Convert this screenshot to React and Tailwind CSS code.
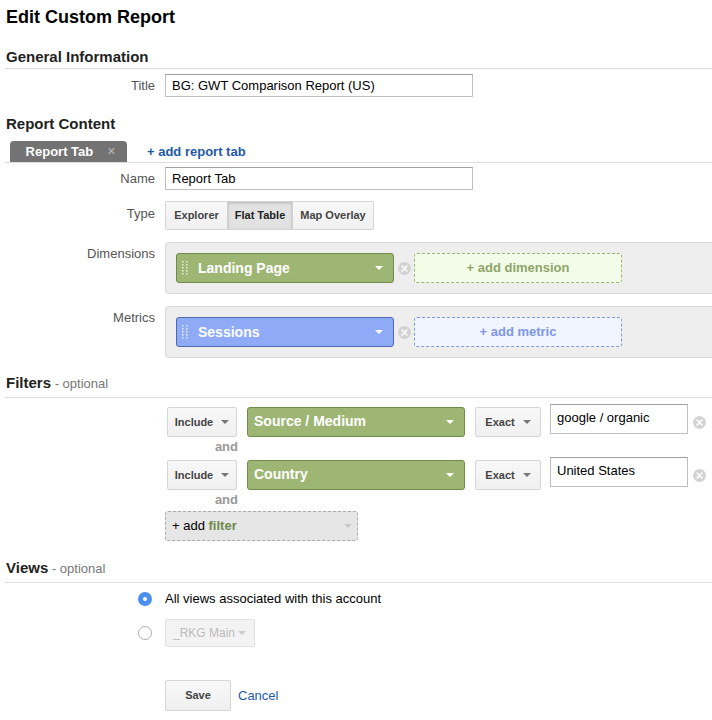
import React from "react";

const font = { fontFamily: '"Liberation Sans", Arial, sans-serif' };

const Caret = ({ className = "border-t-white" }) => (
  <span className={`inline-block w-0 h-0 border-l-[4px] border-r-[4px] border-t-[4px] border-l-transparent border-r-transparent ${className}`} />
);

const RemoveIcon = () => (
  <svg width="13" height="13" viewBox="0 0 13 13">
    <circle cx="6.5" cy="6.5" r="6.5" fill="#d3d3d3" />
    <path d="M4 4l5 5M9 4l-5 5" stroke="#fff" strokeWidth="1.6" strokeLinecap="round" />
  </svg>
);

const Handle = () => (
  <svg width="6" height="14" viewBox="0 0 6 14" className="shrink-0">
    {[1, 4, 7, 10, 13].map((y) => (
      <g key={y}>
        <rect x="0" y={y - 1} width="1.5" height="1.5" fill="#fff" opacity="0.8" />
        <rect x="4" y={y - 1} width="1.5" height="1.5" fill="#fff" opacity="0.8" />
      </g>
    ))}
  </svg>
);

const Label = ({ children, className = "" }) => (
  <div className={`w-[150px] shrink-0 text-right text-[13px] leading-[20px] text-[#555] ${className}`}>{children}</div>
);

const SectionHead = ({ title, optional, className = "" }) => (
  <div className={`border-b border-[#dcdcdc] leading-[20px] ${className}`}>
    <span className="text-[15px] font-bold text-[#222]">{title}</span>
    {optional && <span className="text-[13px] text-[#777]"> - optional</span>}
  </div>
);

const GrayButton = ({ children, className = "" }) => (
  <div className={`flex items-center justify-center gap-2 rounded-[2px] border border-[#d5d5d5] bg-gradient-to-b from-[#f8f8f8] to-[#f0f0f0] text-[11px] font-bold text-[#444] ${className}`}>
    {children}
  </div>
);

const Chip = ({ label, color, className = "" }) => (
  <div className={`flex items-center justify-between rounded-[3px] border pl-[5px] pr-[10px] text-[14px] font-bold text-white ${color} ${className}`}>
    <div className="flex items-center gap-[10px]">
      <Handle />
      <span>{label}</span>
    </div>
    <Caret />
  </div>
);

const FilterRow = ({ field, value }) => (
  <div className="flex items-start h-[33px]">
    <GrayButton className="ml-[2px] mt-[3px] h-[30px] w-[70px]">
      <span>Include</span>
      <Caret className="border-t-[#777]" />
    </GrayButton>
    <div className="ml-[10px] mt-[3px] flex h-[30px] w-[218px] items-center justify-between rounded-[3px] border border-[#6f8a4a] bg-[#9eb674] pl-[6px] pr-[10px] text-[14px] font-bold text-white">
      <span className="-mt-[2px]">{field}</span>
      <Caret />
    </div>
    <GrayButton className="ml-[10px] mt-[3px] h-[30px] w-[66px]">
      <span>Exact</span>
      <Caret className="border-t-[#777]" />
    </GrayButton>
    <div className="ml-[9px] flex h-[30px] w-[138px] items-start border border-[#c0c0c0] border-t-[#a0a0a0] pl-[6px] pt-[5px] text-[13px] leading-[16px] text-black">
      {value}
    </div>
    <div className="ml-[5px] mt-[12px]">
      <RemoveIcon />
    </div>
  </div>
);

export default function App() {
  return (
    <div style={font} className="w-[712px] h-[720px] overflow-hidden bg-white pl-[5px] text-black">
      <h1 className="pt-[6px] pl-[1px] text-[18px] font-bold leading-[22px]">Edit Custom Report</h1>

      <SectionHead title="General Information" className="mt-[19px] pl-[1px] pb-[1px]" />
      <div className="mt-[5px] flex items-center">
        <Label>Title</Label>
        <div className="ml-[10px] flex h-[23px] w-[308px] items-center border border-[#c0c0c0] border-t-[#a0a0a0] pl-[6px] text-[13px]">
          BG: GWT Comparison Report (US)
        </div>
      </div>

      <div className="mt-[17px] pl-[1px] text-[15px] font-bold leading-[20px] text-[#222]">Report Content</div>
      <div className="mt-[7px] flex items-end border-b border-[#dcdcdc]">
        <div className="ml-[5px] flex h-[21px] w-[117px] items-center justify-center gap-[14px] rounded-t-[4px] bg-[#737373] pl-[4px] text-[13px] font-bold text-white">
          <span>Report Tab</span>
          <span className="text-[#bbb] font-normal text-[14px]">×</span>
        </div>
        <div className="ml-[20px] pb-[1px] text-[13px] font-bold leading-[18px] text-[#1f5aa6]">+ add report tab</div>
      </div>

      <div className="mt-[4px] flex items-center">
        <Label>Name</Label>
        <div className="ml-[10px] flex h-[23px] w-[308px] items-center border border-[#c0c0c0] border-t-[#a0a0a0] pl-[6px] text-[13px]">
          Report Tab
        </div>
      </div>

      <div className="mt-[11px] flex items-start">
        <Label className="pt-[3px]">Type</Label>
        <div className="ml-[10px] flex h-[29px] overflow-hidden rounded-[2px] border border-[#d5d5d5] text-[11px] font-bold text-[#444]">
          <div className="flex w-[61px] items-center justify-center bg-gradient-to-b from-[#f8f8f8] to-[#f0f0f0]">Explorer</div>
          <div className="flex w-[66px] items-center justify-center border-x border-[#d0d0d0] bg-[#e2e2e2] shadow-[inset_0_1px_3px_rgba(0,0,0,0.2)] text-[#222]">Flat Table</div>
          <div className="flex w-[80px] items-center justify-center bg-gradient-to-b from-[#f8f8f8] to-[#f0f0f0]">Map Overlay</div>
        </div>
      </div>

      <div className="mt-[12px] flex items-start">
        <Label className="pt-[2px]">Dimensions</Label>
        <div className="ml-[10px] flex h-[52px] flex-1 items-center rounded-l-[4px] border border-r-0 border-[#d8d8d8] bg-[#eeeeee] pl-[10px]">
          <Chip label="Landing Page" color="border-[#6f8a4a] bg-[#9eb674]" className="h-[30px] w-[218px]" />
          <div className="ml-[4px] flex"><RemoveIcon /></div>
          <div className="ml-[3px] flex h-[30px] w-[208px] items-center justify-center rounded-[3px] border border-dashed border-[#9eb674] bg-[#f3fce8] text-[13px] font-bold text-[#8ea66a]">
            + add dimension
          </div>
        </div>
      </div>

      <div className="mt-[12px] flex items-start">
        <Label className="pt-[2px]">Metrics</Label>
        <div className="ml-[10px] flex h-[52px] flex-1 items-center rounded-l-[4px] border border-r-0 border-[#d8d8d8] bg-[#eeeeee] pl-[10px]">
          <Chip label="Sessions" color="border-[#4f68b0] bg-[#8fabf8]" className="h-[30px] w-[218px]" />
          <div className="ml-[4px] flex"><RemoveIcon /></div>
          <div className="ml-[3px] flex h-[30px] w-[208px] items-center justify-center rounded-[3px] border border-dashed border-[#7d9be6] bg-[#f1f5ff] text-[13px] font-bold text-[#7f97e3]">
            + add metric
          </div>
        </div>
      </div>

      <SectionHead title="Filters" optional className="mt-[15px] pl-[1px] pb-[3px]" />

      <div className="ml-[160px] mt-[6px]">
        <FilterRow field="Source / Medium" value="google / organic" />
        <div className="w-[73px] text-right text-[13px] font-bold text-[#999] leading-[20px]">and</div>
        <FilterRow field="Country" value="United States" />
        <div className="w-[73px] text-right text-[13px] font-bold text-[#999] leading-[20px]">and</div>
        <div className="mt-[1px] flex h-[30px] w-[193px] items-center justify-between rounded-[3px] border border-dashed border-[#aaa] bg-[#e6e6e6] pl-[6px] pr-[5px] text-[13px]">
          <span>+ add <span className="font-bold text-[#6d8a4b]">filter</span></span>
          <Caret className="border-t-[#c8c8c8]" />
        </div>
      </div>

      <SectionHead title="Views" optional className="mt-[17px] pl-[1px] pb-[3px]" />

      <div className="mt-[6px] flex h-[20px] items-center">
        <div className="ml-[133px] flex h-[14px] w-[14px] items-center justify-center rounded-full bg-[#4a8ff0]">
          <div className="h-[4px] w-[4px] rounded-full bg-white" />
        </div>
        <span className="ml-[13px] text-[13px] leading-[20px]">All views associated with this account</span>
      </div>
      <div className="mt-[10px] flex items-center">
        <div className="ml-[133px] h-[14px] w-[14px] rounded-full border border-[#b0b0b0] bg-white" />
        <div className="ml-[13px] flex h-[28px] w-[90px] items-center justify-between rounded-[2px] border border-[#e0e0e0] bg-[#f3f3f3] pl-[7px] pr-[8px] text-[12px] text-[#bbb]">
          <span>_RKG Main</span>
          <Caret className="border-t-[#ccc]" />
        </div>
      </div>

      <div className="mt-[33px] ml-[160px] flex items-center">
        <GrayButton className="h-[31px] w-[66px]">Save</GrayButton>
        <span className="ml-[7px] text-[13px] text-[#1f5aa6]">Cancel</span>
      </div>
    </div>
  );
}
